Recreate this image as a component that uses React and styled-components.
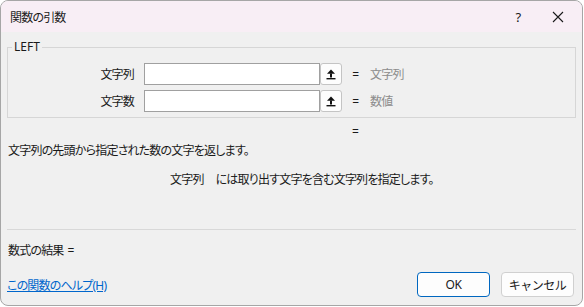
import styled, { createGlobalStyle } from 'styled-components';

const Global = createGlobalStyle`
    html, body {
        margin: 0;
        padding: 0;
        background: #ffffff;
    }
    body {
        font-family: "Noto Sans", "Noto Sans CJK JP", sans-serif;
        font-size: 12px;
        color: #1a1a1a;
    }
`;

const Window = styled.div`
    width: 583px;
    height: 306px;
    box-sizing: border-box;
    border: 1px solid #a6a6a6;
    border-radius: 8px;
    overflow: hidden;
    background: #f0f0f0;
    display: flex;
    flex-direction: column;
    font-feature-settings: "palt";
    letter-spacing: -0.8px;
`;

const TitleBar = styled.div`
    height: 31px;
    flex: none;
    background: #f8eef5;
    display: flex;
    align-items: center;
    padding-left: 9px;
`;

const Title = styled.div`
    flex: 1;
    font-size: 12px;
    color: #1a1a1a;
`;

const TitleButton = styled.div`
    width: 40px;
    height: 31px;
    display: flex;
    align-items: center;
    justify-content: center;
    font-size: 13px;
    margin-right: ${p => p.$gap || 0}px;
`;

const Body = styled.div`
    flex: 1;
    display: flex;
    flex-direction: column;
    padding: 0 6px;
`;

const Group = styled.fieldset`
    margin: 8px 0 0 0;
    padding: 9px 0 5px 0;
    border: 1px solid #d6d6d6;
    display: flex;
    flex-direction: column;
    gap: 5px;
`;

const Legend = styled.legend`
    padding: 0 2px;
    margin-left: 4px;
    line-height: 14px;
    font-size: 12px;
    letter-spacing: 0;
`;

const ArgRow = styled.div`
    display: grid;
    grid-template-columns: 136px 176px 22px 17px 1fr;
    align-items: center;
    height: 22px;
`;

const ArgLabel = styled.div`
    text-align: right;
    padding-right: 10px;
`;

const ArgInput = styled.input`
    height: 22px;
    box-sizing: border-box;
    border: 1px solid #a0a0a0;
    background: #fff;
    margin: 0;
    outline: none;
`;

const RefButton = styled.div`
    width: 22px;
    height: 22px;
    box-sizing: border-box;
    border: 1px solid #c4c4c4;
    border-radius: 3px;
    background: #fdfdfd;
    display: flex;
    align-items: center;
    justify-content: center;
`;

const Eq = styled.div`
    text-align: right;
    letter-spacing: 0;
`;

const ArgValue = styled.div`
    padding-left: 11px;
    color: #8c8c8c;
`;

const EqLine = styled.div`
    margin-top: 6px;
    height: 16px;
    line-height: 16px;
    padding-left: 345px;
`;

const Text = styled.div`
    height: 16px;
    line-height: 16px;
    margin-top: ${p => p.$top}px;
    padding-left: ${p => p.$indent || 0}px;
    white-space: pre;
`;

const ParamName = styled.span`
    margin-right: 12px;
`;

const ResultEq = styled.span`
    margin-left: 4px;
    letter-spacing: 0;
`;

const Separator = styled.div`
    margin-top: 41px;
    height: 1px;
    background: #d8d8d8;
`;

const Footer = styled.div`
    margin-top: 13px;
    display: flex;
    align-items: center;
    gap: 11px;
`;

const HelpLink = styled.a`
    flex: 1;
    color: #0066cc;
    text-decoration: underline;
    cursor: pointer;
`;

const Button = styled.button`
    width: 73px;
    height: 25px;
    box-sizing: border-box;
    border-radius: 4px;
    border: 1px solid ${p => (p.$primary ? '#0067c0' : '#d0d0d0')};
    background: #fdfdfd;
    font-family: inherit;
    font-size: 12px;
    letter-spacing: -0.5px;
    color: #1a1a1a;
    padding: 0;
    margin-right: ${p => p.$last ? 2 : 0}px;
`;

const UpArrow = () => (
    <svg width="10" height="11" viewBox="0 0 10 11">
        <polygon points="5,0.5 1,4.8 9,4.8" fill="#111" />
        <rect x="4" y="4.5" width="2" height="4" fill="#111" />
        <rect x="0.5" y="9" width="9" height="1.4" fill="#111" />
    </svg>
);

const CloseIcon = () => (
    <svg width="12" height="12" viewBox="0 0 12 12">
        <path d="M1 1 L11 11 M11 1 L1 11" stroke="#1a1a1a" strokeWidth="1.1" />
    </svg>
);

const args = [
    { name: '文字列', value: '文字列' },
    { name: '文字数', value: '数値' },
];

export default function App() {
    return (
        <>
            <Global />
            <Window>
                <TitleBar>
                    <Title>関数の引数</Title>
                    <TitleButton $gap={0}>?</TitleButton>
                    <TitleButton $gap={4}><CloseIcon /></TitleButton>
                </TitleBar>
                <Body>
                    <Group>
                        <Legend>LEFT</Legend>
                        {args.map(a => (
                            <ArgRow key={a.name}>
                                <ArgLabel>{a.name}</ArgLabel>
                                <ArgInput />
                                <RefButton><UpArrow /></RefButton>
                                <Eq>=</Eq>
                                <ArgValue>{a.value}</ArgValue>
                            </ArgRow>
                        ))}
                    </Group>
                    <EqLine>=</EqLine>
                    <Text $top={3} $indent={1}>文字列の先頭から指定された数の文字を返します。</Text>
                    <Text $top={13} $indent={163}>
                        <ParamName>文字列</ParamName>には取り出す文字を含む文字列を指定します。
                    </Text>
                    <Separator />
                    <Text $top={13} $indent={1}>数式の結果<ResultEq>=</ResultEq></Text>
                    <Footer>
                        <HelpLink>この関数のヘルプ(H)</HelpLink>
                        <Button $primary>OK</Button>
                        <Button $last>キャンセル</Button>
                    </Footer>
                </Body>
            </Window>
        </>
    );
}
